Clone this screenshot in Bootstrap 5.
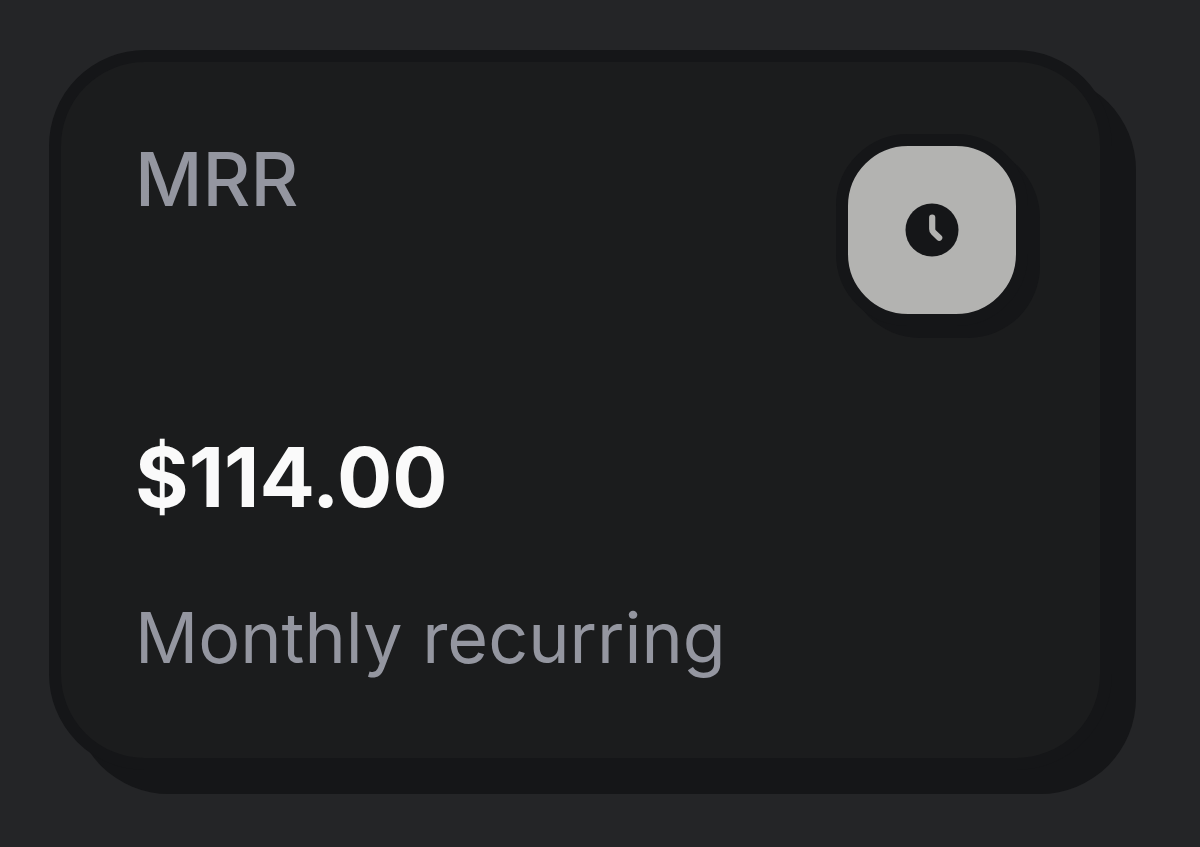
<!DOCTYPE html>
<html lang="en">
<head>
<meta charset="utf-8">
<meta name="viewport" content="width=device-width, initial-scale=1">
<title>MRR</title>
<link href="https://cdn.jsdelivr.net/npm/bootstrap@5.3.0/dist/css/bootstrap.min.css" rel="stylesheet">
<style>
  body { background: #242527; font-family: Inter, "Liberation Sans", sans-serif; }
  .page { padding: 50px 88px 76px 49px; }
  .stat-card {
    --bs-card-bg: #1b1c1d;
    border: 12px solid #151618;
    border-radius: 96px;
    box-shadow: 24px 24px 0 #151618;
  }
  .stat-body { padding: 72px 72px 72px 74px; }
  .stat-label, .stat-note { color: #9496a0; }
  .stat-label { font-size: 74px; font-weight: 500; line-height: 90px; }
  .stat-value { color: #fafafa; font-size: 82px; font-weight: 700; line-height: 96px; margin-top: 104px; }
  .stat-note { font-size: 70px; line-height: 96px; margin-top: 64px; }
  .stat-icon {
    width: 192px; height: 192px;
    color: #151618;
    background: #b3b3b1;
    border: 12px solid #151618;
    border-radius: 72px;
    box-shadow: 12px 12px 0 #151618;
  }
</style>
</head>
<body>
<main class="page">
  <section class="card stat-card">
    <div class="card-body stat-body">
      <div class="d-flex justify-content-between align-items-start">
        <h2 class="stat-label mb-0">MRR</h2>
        <div class="stat-icon d-flex align-items-center justify-content-center flex-shrink-0">
          <svg width="54" height="54" viewBox="0 0 54 54" aria-hidden="true">
            <circle cx="27" cy="27" r="26.5" fill="currentColor"/>
            <path d="M27.2 14.5v11.5q0 2 1.4 3.4l5.6 5.4" fill="none" stroke="#b3b3b1" stroke-width="6.2" stroke-linecap="round" stroke-linejoin="round"/>
          </svg>
        </div>
      </div>
      <p class="stat-value mb-0">$114.00</p>
      <p class="stat-note mb-0">Monthly recurring</p>
    </div>
  </section>
</main>
<script src="https://cdn.jsdelivr.net/npm/bootstrap@5.3.0/dist/js/bootstrap.bundle.min.js"></script>
</body>
</html>
